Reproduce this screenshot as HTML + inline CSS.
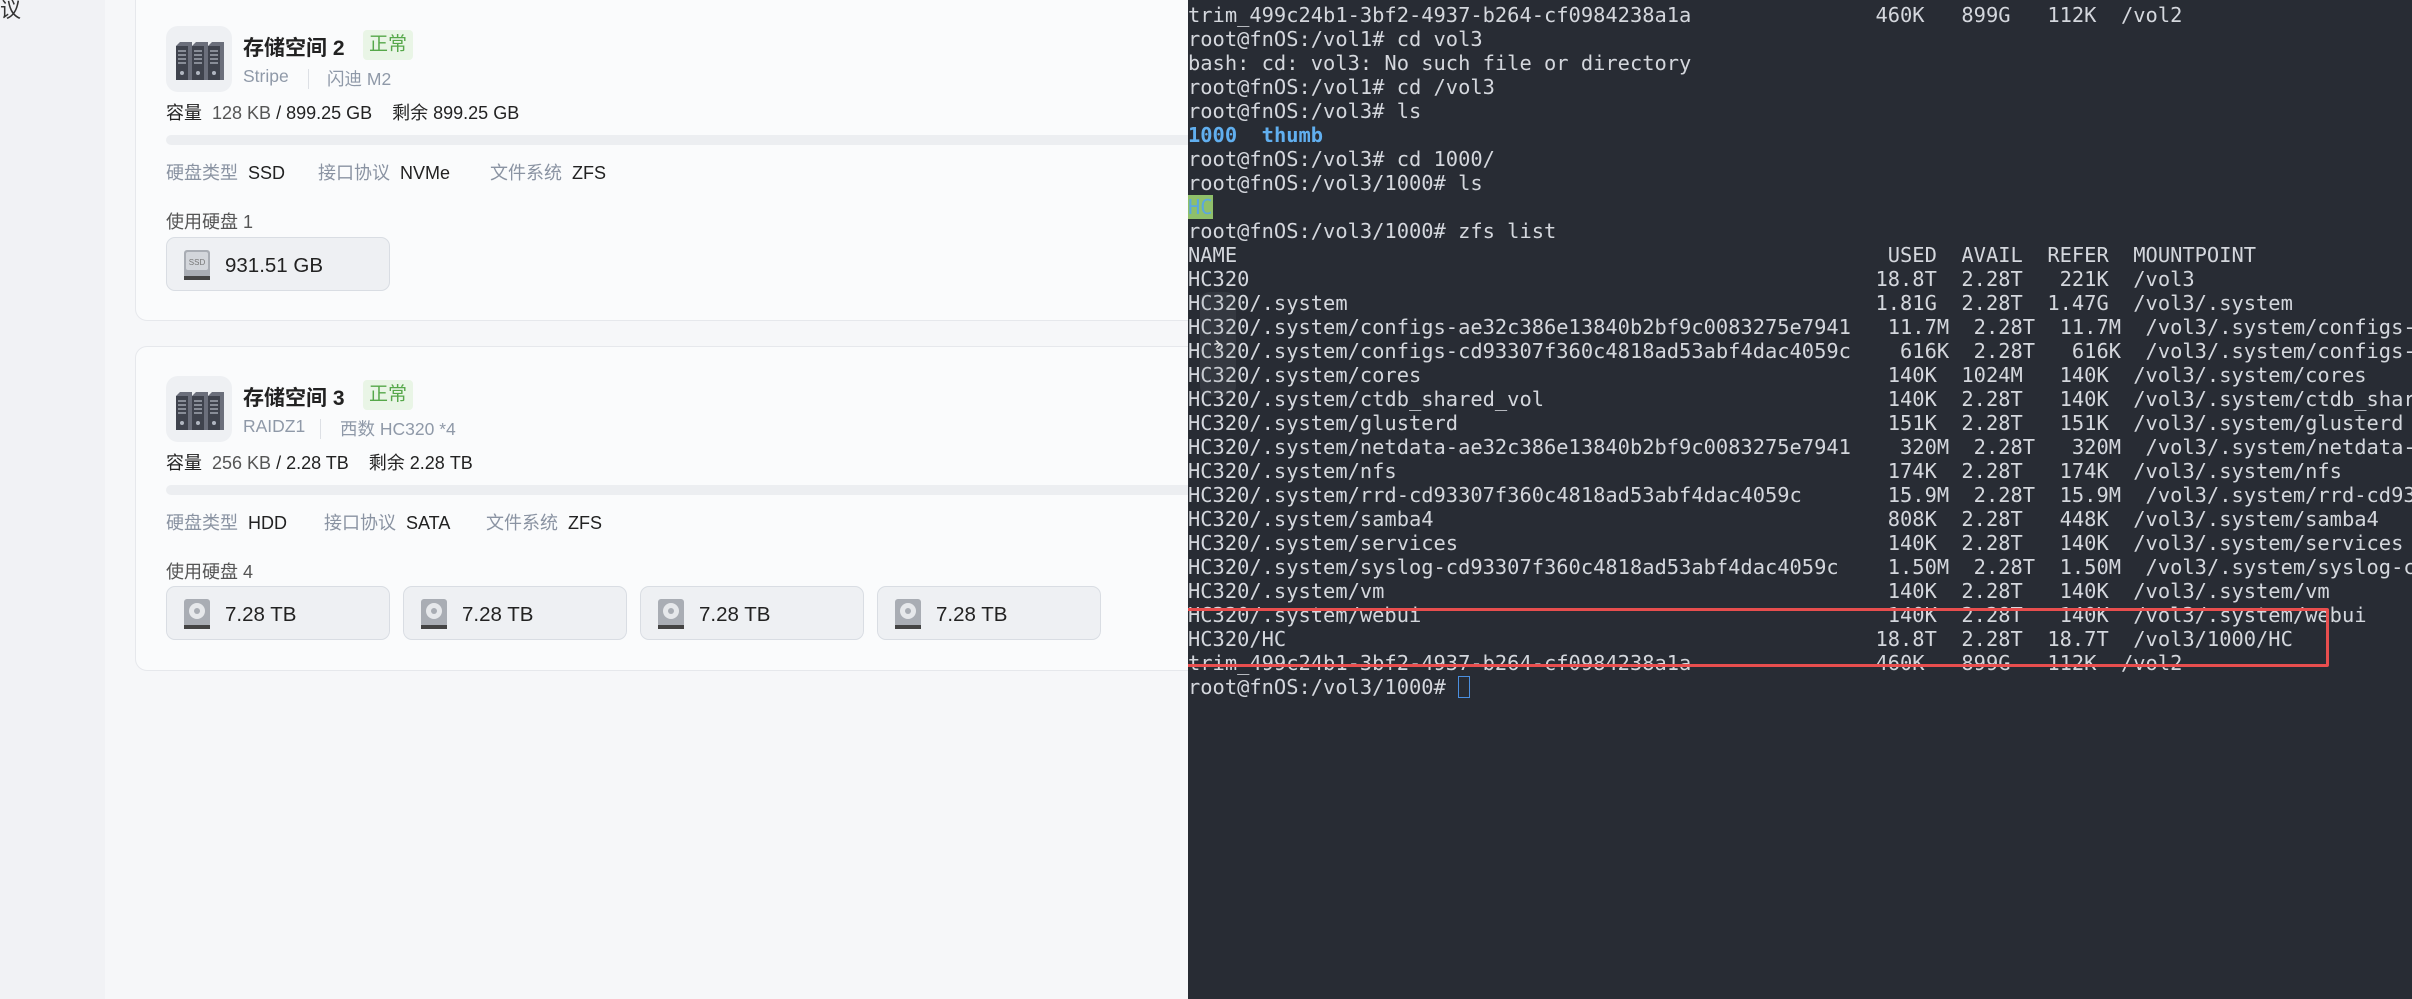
<!DOCTYPE html>
<html><head><meta charset="utf-8"><style>
*{margin:0;padding:0;box-sizing:border-box}
body{width:2412px;height:999px;overflow:hidden;background:#f6f7f9;font-family:"Liberation Sans","Noto Sans CJK SC",sans-serif;position:relative}
.side{position:absolute;left:0;top:0;width:105px;height:999px;background:#f1f2f5}
.side span{position:absolute;left:0;top:-6px;font-size:21px;color:#333}
.card{position:absolute;left:135px;width:1200px;background:#fafbfc;border:1.5px solid #e6e8ec;border-radius:12px}
.ab{position:absolute;white-space:nowrap}
.ico{width:66px;height:66px;background:#eef0f3;border-radius:12px}
.title{font-size:21px;font-weight:bold;color:#222}
.tag{background:#e9f5e6;color:#56a84a;font-size:19px;border-radius:4px;padding:2px 6px;height:30px;line-height:26px}
.sub{font-size:17.5px;color:#8f99a8}
.lbl{color:#8a93a2}
.t{font-size:18px;color:#222}
.bar{height:10px;background:#eceef1;border-radius:5px;width:1100px}
.chip{width:224px;height:54px;background:#eef0f3;border:1.5px solid #d9dde3;border-radius:9px}
.chip span{position:absolute;left:58px;top:16px;font-size:20.5px;color:#222}
.term{position:absolute;left:1188px;top:0;width:1224px;height:999px;background:#282c34;overflow:hidden}
pre{position:absolute;left:0;top:3px;font-family:"DejaVu Sans Mono","Liberation Mono",monospace;font-size:20.4px;line-height:24px;color:#d4d7dd;white-space:pre}
.b{color:#61afef;font-weight:bold}
.hl{background:#8fbf6a;color:#5aa7e0}
.cur{display:inline-block;width:12px;height:22px;border:1.5px solid #4a8fe0;vertical-align:-4px}
.red{position:absolute;left:-5px;top:608px;width:1146px;height:59px;border:3px solid #e84e4e;border-radius:2px}
.ov{position:absolute;left:12px;top:292px;width:36px;height:104px;background:rgba(120,125,135,.15);border-radius:10px;color:#ddd;font-size:20px;text-align:center;line-height:104px}
</style></head><body>
<div class="side"><span>议</span></div>

<div class="card" style="top:-20px;height:341px"></div>
<div class="card" style="top:346px;height:325px"></div>

<!-- card 1 -->
<div class="ab ico" style="left:166px;top:26px"><svg width="66" height="66" viewBox="0 0 66 66"><g fill="#6b6f7b"><path d="M10 20l4-4h12v38H10z"/><path d="M26 20l4-4h12v38H26z"/><path d="M42 20l4-4h12v38H42z"/></g><g fill="#3f434d"><rect x="10" y="20" width="12" height="34"/><rect x="26" y="20" width="12" height="34"/><rect x="42" y="20" width="12" height="34"/></g><g stroke="#a0a6b0" stroke-width="1.6"><path d="M12 25h8M12 29h8M12 33h8M12 37h8M28 25h8M28 29h8M28 33h8M28 37h8M44 25h8M44 29h8M44 33h8M44 37h8"/></g><g fill="#b0b6c0"><circle cx="16" cy="47" r="2"/><circle cx="32" cy="47" r="2"/><circle cx="48" cy="47" r="2"/></g></svg></div>
<div class="ab title" style="left:243px;top:32px">存储空间 2</div>
<div class="ab tag" style="left:363px;top:30px">正常</div>
<div class="ab sub" style="left:243px;top:66px">Stripe</div>
<div class="ab" style="left:308px;top:69px;width:1px;height:20px;background:#dde0e5"></div>
<div class="ab sub" style="left:327px;top:66px">闪迪 M2</div>
<div class="ab t" style="left:166px;top:99px">容量 &nbsp;<span style="color:#555">128 KB</span> / 899.25 GB &nbsp;&nbsp; 剩余 899.25 GB</div>
<div class="ab bar" style="left:166px;top:135px"></div>
<div class="ab t" style="left:166px;top:159px"><span class="lbl">硬盘类型</span>&nbsp; SSD</div>
<div class="ab t" style="left:318px;top:159px"><span class="lbl">接口协议</span>&nbsp; NVMe</div>
<div class="ab t" style="left:490px;top:159px"><span class="lbl">文件系统</span>&nbsp; ZFS</div>
<div class="ab t" style="left:166px;top:208px;color:#555">使用硬盘 1</div>
<div class="ab chip" style="left:166px;top:237px"><svg class="ab" style="left:14px;top:10px" width="34" height="34" viewBox="0 0 34 34"><rect x="3" y="2" width="26" height="28" rx="3" fill="#a9adb4"/><rect x="5" y="4" width="22" height="18" rx="2" fill="#d3d6db"/><text x="16" y="17" font-size="8" text-anchor="middle" fill="#777" font-family="Liberation Sans">SSD</text><rect x="3" y="28" width="26" height="4" fill="#444"/></svg><span>931.51 GB</span></div>

<!-- card 2 -->
<div class="ab ico" style="left:166px;top:376px"><svg width="66" height="66" viewBox="0 0 66 66"><g fill="#6b6f7b"><path d="M10 20l4-4h12v38H10z"/><path d="M26 20l4-4h12v38H26z"/><path d="M42 20l4-4h12v38H42z"/></g><g fill="#3f434d"><rect x="10" y="20" width="12" height="34"/><rect x="26" y="20" width="12" height="34"/><rect x="42" y="20" width="12" height="34"/></g><g stroke="#a0a6b0" stroke-width="1.6"><path d="M12 25h8M12 29h8M12 33h8M12 37h8M28 25h8M28 29h8M28 33h8M28 37h8M44 25h8M44 29h8M44 33h8M44 37h8"/></g><g fill="#b0b6c0"><circle cx="16" cy="47" r="2"/><circle cx="32" cy="47" r="2"/><circle cx="48" cy="47" r="2"/></g></svg></div>
<div class="ab title" style="left:243px;top:382px">存储空间 3</div>
<div class="ab tag" style="left:363px;top:380px">正常</div>
<div class="ab sub" style="left:243px;top:416px">RAIDZ1</div>
<div class="ab" style="left:320px;top:419px;width:1px;height:20px;background:#dde0e5"></div>
<div class="ab sub" style="left:340px;top:416px">西数 HC320 *4</div>
<div class="ab t" style="left:166px;top:449px">容量 &nbsp;<span style="color:#555">256 KB</span> / 2.28 TB &nbsp;&nbsp; 剩余 2.28 TB</div>
<div class="ab bar" style="left:166px;top:485px"></div>
<div class="ab t" style="left:166px;top:509px"><span class="lbl">硬盘类型</span>&nbsp; HDD</div>
<div class="ab t" style="left:324px;top:509px"><span class="lbl">接口协议</span>&nbsp; SATA</div>
<div class="ab t" style="left:486px;top:509px"><span class="lbl">文件系统</span>&nbsp; ZFS</div>
<div class="ab t" style="left:166px;top:558px;color:#555">使用硬盘 4</div>
<div class="ab chip" style="left:166px;top:586px"><svg class="ab" style="left:14px;top:10px" width="34" height="34" viewBox="0 0 34 34"><rect x="3" y="2" width="26" height="28" rx="3" fill="#a9adb4"/><circle cx="16" cy="14" r="8" fill="#e6e8eb"/><circle cx="16" cy="14" r="3" fill="#a9adb4"/><rect x="3" y="28" width="26" height="4" fill="#444"/></svg><span>7.28 TB</span></div>
<div class="ab chip" style="left:403px;top:586px"><svg class="ab" style="left:14px;top:10px" width="34" height="34" viewBox="0 0 34 34"><rect x="3" y="2" width="26" height="28" rx="3" fill="#a9adb4"/><circle cx="16" cy="14" r="8" fill="#e6e8eb"/><circle cx="16" cy="14" r="3" fill="#a9adb4"/><rect x="3" y="28" width="26" height="4" fill="#444"/></svg><span>7.28 TB</span></div>
<div class="ab chip" style="left:640px;top:586px"><svg class="ab" style="left:14px;top:10px" width="34" height="34" viewBox="0 0 34 34"><rect x="3" y="2" width="26" height="28" rx="3" fill="#a9adb4"/><circle cx="16" cy="14" r="8" fill="#e6e8eb"/><circle cx="16" cy="14" r="3" fill="#a9adb4"/><rect x="3" y="28" width="26" height="4" fill="#444"/></svg><span>7.28 TB</span></div>
<div class="ab chip" style="left:877px;top:586px"><svg class="ab" style="left:14px;top:10px" width="34" height="34" viewBox="0 0 34 34"><rect x="3" y="2" width="26" height="28" rx="3" fill="#a9adb4"/><circle cx="16" cy="14" r="8" fill="#e6e8eb"/><circle cx="16" cy="14" r="3" fill="#a9adb4"/><rect x="3" y="28" width="26" height="4" fill="#444"/></svg><span>7.28 TB</span></div>

<div class="term">
<pre>trim_499c24b1-3bf2-4937-b264-cf0984238a1a               460K   899G   112K  /vol2
root@fnOS:/vol1# cd vol3
bash: cd: vol3: No such file or directory
root@fnOS:/vol1# cd /vol3
root@fnOS:/vol3# ls
<span class="b">1000</span>  <span class="b">thumb</span>
root@fnOS:/vol3# cd 1000/
root@fnOS:/vol3/1000# ls
<span class="hl">HC</span>
root@fnOS:/vol3/1000# zfs list
NAME                                                     USED  AVAIL  REFER  MOUNTPOINT
HC320                                                   18.8T  2.28T   221K  /vol3
HC320/.system                                           1.81G  2.28T  1.47G  /vol3/.system
HC320/.system/configs-ae32c386e13840b2bf9c0083275e7941   11.7M  2.28T  11.7M  /vol3/.system/configs-ae32c386e13840b2bf9c0083275e7941
HC320/.system/configs-cd93307f360c4818ad53abf4dac4059c    616K  2.28T   616K  /vol3/.system/configs-cd93307f360c4818ad53abf4dac4059c
HC320/.system/cores                                      140K  1024M   140K  /vol3/.system/cores
HC320/.system/ctdb_shared_vol                            140K  2.28T   140K  /vol3/.system/ctdb_shared_vol
HC320/.system/glusterd                                   151K  2.28T   151K  /vol3/.system/glusterd
HC320/.system/netdata-ae32c386e13840b2bf9c0083275e7941    320M  2.28T   320M  /vol3/.system/netdata-ae32c386e13840b2bf9c0083275e7941
HC320/.system/nfs                                        174K  2.28T   174K  /vol3/.system/nfs
HC320/.system/rrd-cd93307f360c4818ad53abf4dac4059c       15.9M  2.28T  15.9M  /vol3/.system/rrd-cd93307f360c4818ad53abf4dac4059c
HC320/.system/samba4                                     808K  2.28T   448K  /vol3/.system/samba4
HC320/.system/services                                   140K  2.28T   140K  /vol3/.system/services
HC320/.system/syslog-cd93307f360c4818ad53abf4dac4059c    1.50M  2.28T  1.50M  /vol3/.system/syslog-cd93307f360c4818ad53abf4dac4059c
HC320/.system/vm                                         140K  2.28T   140K  /vol3/.system/vm
HC320/.system/webui                                      140K  2.28T   140K  /vol3/.system/webui
HC320/HC                                                18.8T  2.28T  18.7T  /vol3/1000/HC
trim_499c24b1-3bf2-4937-b264-cf0984238a1a               460K   899G   112K  /vol2
root@fnOS:/vol3/1000# <span class="cur"></span></pre>
<div class="red"></div>
<div class="ov">›</div>
</div>
</body></html>
